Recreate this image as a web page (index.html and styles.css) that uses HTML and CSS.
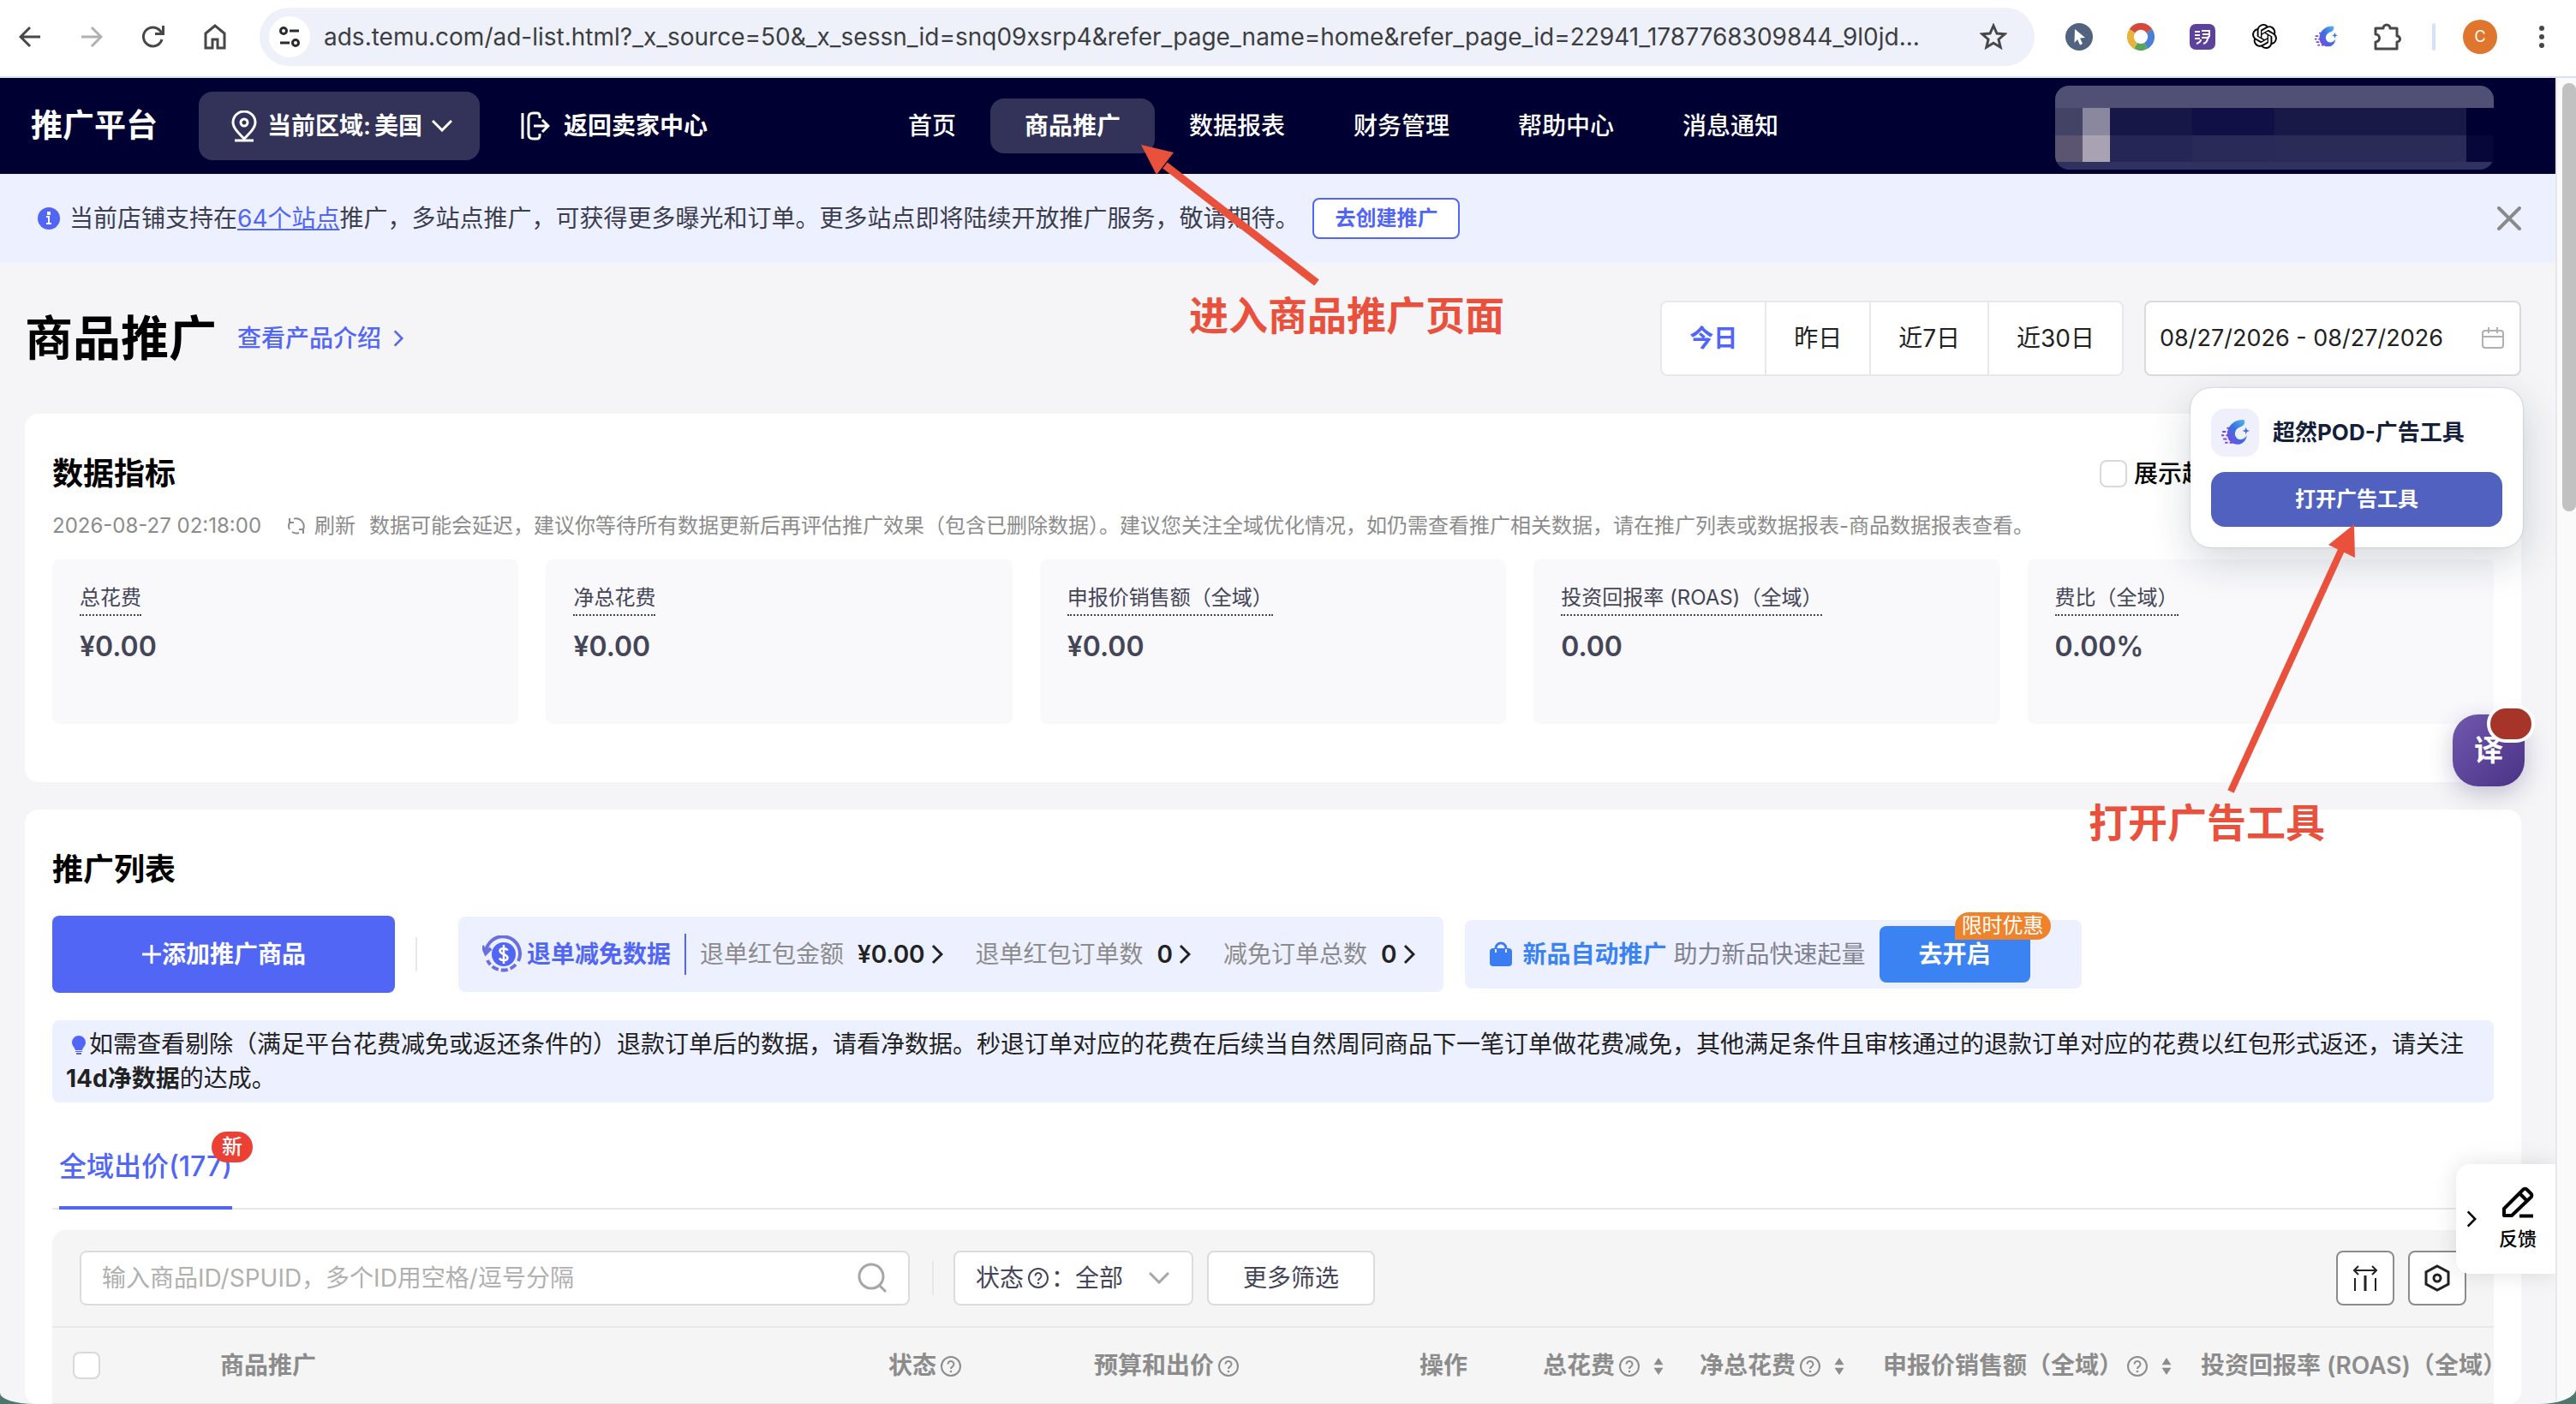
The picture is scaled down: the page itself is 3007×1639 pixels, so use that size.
FILE: index.html
```html
<!DOCTYPE html>
<html lang="zh-CN">
<head>
    <meta charset="UTF-8">
    <meta name="viewport" content="width=device-width, initial-scale=1.0">
    <title>商品推广</title>
    <link rel="stylesheet" href="styles.css">
</head>
<body>
    <svg class="symbols" aria-hidden="true">
        <symbol id="i-right" viewBox="0 0 14 24"><path d="M2 2l10 10L2 22" fill="none" stroke="currentColor" stroke-width="3"/></symbol>
        <symbol id="i-down" viewBox="0 0 24 14"><path d="M1 1l11 11L23 1" fill="none" stroke="currentColor" stroke-width="3"/></symbol>
        <symbol id="i-help" viewBox="0 0 24 24">
            <circle cx="12" cy="12" r="11" fill="none" stroke="currentColor" stroke-width="2"/>
            <path d="M8.500 9.500a3.500 3.500 0 1 1 5.500 2.800c-1.300 .9-2 1.300-2 2.700" fill="none" stroke="currentColor" stroke-width="2"/>
            <circle cx="12" cy="18" r="1.300" fill="currentColor"/>
        </symbol>
        <symbol id="i-sort" viewBox="0 0 12 22"><path d="M6 0l6 9H0zM6 22l6-9H0z" fill="currentColor"/></symbol>
        <symbol id="i-pod" viewBox="0 0 32 32">
            <defs>
                <linearGradient id="pod" x1="1" y1="0" x2="0" y2="1">
                    <stop offset="0" stop-color="#4fc3f5"/>
                    <stop offset=".5" stop-color="#3b6fe0"/>
                    <stop offset="1" stop-color="#7b4be0"/>
                </linearGradient>
            </defs>
            <path d="M26 2c2 4-1 7-5 8-5 2-7 8-3 12 4 3 8 1 11-3-1 8-8 12-15 9-7-3-8-12-5-17C12 5 19 1 26 2z" fill="url(#pod)"/>
            <path d="M28 10l1 3 3 1-3 1-1 3-1-3-3-1 3-1z" fill="#3b6fe0"/>
            <path d="M2 15h4M1 19h3M6 19h4M3 23h4M9 23h3M5 27h3M10 27h3M7 11h3" stroke="#7448dc" stroke-width="2"/>
        </symbol>
    </svg>

    <div class="toolbar">
        <button class="tool" aria-label="后退"><svg width="26" height="26" viewBox="0 0 26 26"><path d="M25 13H3M13 2L2 13l11 11" fill="none" stroke="#474747" stroke-width="3"/></svg></button>
        <button class="tool" aria-label="前进"><svg width="26" height="26" viewBox="0 0 26 26"><path d="M1 13h22M13 2l11 11-11 11" fill="none" stroke="#b0b0b0" stroke-width="3"/></svg></button>
        <button class="tool" aria-label="重新加载"><svg width="28" height="28" viewBox="0 0 28 28"><path d="M24 17a11 11 0 1 1-2-10l3 3M25.500 1v9.500H16" fill="none" stroke="#474747" stroke-width="3"/></svg></button>
        <button class="tool" aria-label="主页"><svg width="28" height="30" viewBox="0 0 28 30"><path d="M3 28V11l11-9 11 9v17h-8V18h-6v10z" fill="none" stroke="#474747" stroke-width="3"/></svg></button>
        <div class="address">
            <span class="site-info"><svg width="26" height="24" viewBox="0 0 26 24"><g fill="none" stroke="#2b2b2b" stroke-width="3"><circle cx="6" cy="5" r="3.500"/><circle cx="20" cy="19" r="3.500"/><path d="M13 5h11M2 19h11"/></g></svg></span>
            <input class="url" type="text" aria-label="地址" value="ads.temu.com/ad-list.html?_x_source=50&amp;_x_sessn_id=snq09xsrp4&amp;refer_page_name=home&amp;refer_page_id=22941_1787768309844_9l0jd...">
            <button class="tool" aria-label="收藏"><svg width="32" height="32" viewBox="0 0 32 32"><path d="M16 3l4 9 9 .8-7 6.200 2.200 9.200L16 23.300l-8.200 4.900L10 19l-7-6.200 9-.8z" fill="none" stroke="#474747" stroke-width="3"/></svg></button>
        </div>
        <button class="tool" aria-label="指针扩展"><svg width="32" height="32" viewBox="0 0 32 32"><circle cx="16" cy="16" r="16" fill="#526380"/><path d="M11 7l12 10-6 .6 3 6.400-3 1.400-3-6.500-3.500 4z" fill="#fff"/></svg></button>
        <button class="tool" aria-label="色环扩展"><svg width="32" height="32" viewBox="0 0 32 32"><g fill="none" stroke-width="8"><path d="M6 9.200A12 12 0 0 1 26 9.200" stroke="#d4493a"/><path d="M26 9.200A12 12 0 0 1 22 26.400" stroke="#4a7fd6"/><path d="M22 26.400A12 12 0 0 1 10 26.400" stroke="#5aa35a"/><path d="M10 26.400A12 12 0 0 1 6 9.200" stroke="#e8b33c"/></g></svg></button>
        <button class="tool" aria-label="翻译扩展"><svg width="30" height="30" viewBox="0 0 30 30"><rect width="30" height="30" rx="7" fill="#5d429c"/><path d="M6 9h6M6 13h6M6 17h6M14 8h9M15 12h8M23 7v7l-3 3M14 16h9M21 16c0 4-2 6-5 7M13 18c0 3-2 4-5 5" fill="none" stroke="#fff" stroke-width="2"/></svg></button>
        <button class="tool" aria-label="ChatGPT"><svg width="29" height="29" viewBox="0 0 24 24"><path d="M22.2819 9.8211a5.9847 5.9847 0 0 0-.5157-4.9108 6.0462 6.0462 0 0 0-6.5098-2.9A6.0651 6.0651 0 0 0 4.9807 4.1818a5.9847 5.9847 0 0 0-3.9977 2.9 6.0462 6.0462 0 0 0 .7427 7.0966 5.98 5.98 0 0 0 .511 4.9107 6.051 6.051 0 0 0 6.5146 2.9001A5.9847 5.9847 0 0 0 13.2599 24a6.0557 6.0557 0 0 0 5.7718-4.2058 5.9894 5.9894 0 0 0 3.9977-2.9001 6.0557 6.0557 0 0 0-.7475-7.0729zm-9.022 12.6081a4.4755 4.4755 0 0 1-2.8764-1.0408l.1419-.0804 4.7783-2.7582a.7948.7948 0 0 0 .3927-.6813v-6.7369l2.02 1.1686a.071.071 0 0 1 .038.052v5.5826a4.504 4.504 0 0 1-4.4945 4.4944zm-9.6607-4.1254a4.4708 4.4708 0 0 1-.5346-3.0137l.142.0852 4.783 2.7582a.7712.7712 0 0 0 .7806 0l5.8428-3.3685v2.3324a.0804.0804 0 0 1-.0332.0615L9.74 19.9502a4.4992 4.4992 0 0 1-6.1408-1.6464zM2.3408 7.8956a4.485 4.485 0 0 1 2.3655-1.9728V11.6a.7664.7664 0 0 0 .3879.6765l5.8144 3.3543-2.0201 1.1685a.0757.0757 0 0 1-.071 0l-4.8303-2.7865A4.504 4.504 0 0 1 2.3408 7.872zm16.5963 3.8558L13.1038 8.364 15.1192 7.2a.0757.0757 0 0 1 .071 0l4.8303 2.7913a4.4944 4.4944 0 0 1-.6765 8.1042v-5.6772a.79.79 0 0 0-.407-.667zm2.0107-3.0231l-.142-.0852-4.7735-2.7818a.7759.7759 0 0 0-.7854 0L9.409 9.2297V6.8974a.0662.0662 0 0 1 .0284-.0615l4.8303-2.7866a4.4992 4.4992 0 0 1 6.6802 4.66zM8.3065 12.863l-2.02-1.1638a.0804.0804 0 0 1-.038-.0567V6.0742a4.4992 4.4992 0 0 1 7.3757-3.4537l-.142.0805L8.704 5.459a.7948.7948 0 0 0-.3927.6813zm1.0976-2.3654l2.602-1.4998 2.6069 1.4998v2.9994l-2.5974 1.4997-2.6067-1.4997Z"/></svg></button>
        <button class="tool" aria-label="超然POD"><svg width="28" height="28"><use href="#i-pod"/></svg></button>
        <button class="tool" aria-label="扩展程序"><svg width="34" height="34" viewBox="0 0 34 34"><path d="M3 7h9a4 4 0 0 1 8 0h8v9a3 3 0 0 1 0 7v8H3v-8a4.500 4.500 0 0 0 0-9z" fill="none" stroke="#474747" stroke-width="3" stroke-linejoin="round"/></svg></button>
        <span class="tool-divider"></span>
        <button class="tool" aria-label="用户"><span class="avatar">C</span></button>
        <button class="tool" aria-label="菜单"><svg width="6" height="26" viewBox="0 0 6 26"><g fill="#474747"><circle cx="3" cy="3" r="3"/><circle cx="3" cy="13" r="3"/><circle cx="3" cy="23" r="3"/></g></svg></button>
    </div>

    <div class="viewport">
        <div class="page">
            <header class="header">
                <div class="header-left">
                    <span class="logo">推广平台</span>
                    <div class="region">
                        <svg width="30" height="37" viewBox="0 0 30 37" fill="none" stroke="#fff" stroke-width="3"><path d="M15 33C8 26 2 20 2 14a13 13 0 0 1 26 0c0 6-6 12-13 19z"/><circle cx="15" cy="14" r="4"/><path d="M4 35h22"/></svg>
                        <label for="region">当前区域:</label>
                        <select id="region"><option>美国</option></select>
                        <svg width="24" height="14"><use href="#i-down"/></svg>
                    </div>
                    <a class="back" href="#">
                        <svg width="34" height="34" viewBox="0 0 34 34" fill="none" stroke="#fff" stroke-width="3"><path d="M2 2v30M22 8V5a3 3 0 0 0-3-3h-5c-3 0-5 2-5 5v20c0 3 2 5 5 5h5a3 3 0 0 0 3-3v-3M15 17h16M25 10l7 7-7 7"/></svg>
                        返回卖家中心
                    </a>
                </div>
                <nav class="nav">
                    <a href="#">首页</a>
                    <a class="active" href="#">商品推广</a>
                    <a href="#">数据报表</a>
                    <a href="#">财务管理</a>
                    <a href="#">帮助中心</a>
                    <a href="#">消息通知</a>
                </nav>
                <!-- masked account info -->
                <div class="mask" aria-hidden="true">
                    <i class="m-top"></i>
                    <i class="m1"></i><i class="m2"></i><i class="m3"></i><i class="m4"></i><i class="m5"></i><i class="m6"></i>
                    <i class="m7"></i><i class="m8"></i><i class="m9"></i><i class="m10"></i><i class="m11"></i><i class="m12"></i>
                    <i class="m-bottom"></i>
                </div>
            </header>

            <div class="notice">
                <svg width="26" height="26" viewBox="0 0 26 26"><circle cx="13" cy="13" r="13" fill="#5166f5"/><path d="M10 11h3v8M10 19h6M12 6h2v2h-2z" fill="none" stroke="#fff" stroke-width="2"/></svg>
                <p>当前店铺支持在<a href="#">64个站点</a>推广，多站点推广，可获得更多曝光和订单。更多站点即将陆续开放推广服务，敬请期待。</p>
                <button class="create">去创建推广</button>
                <button class="close" aria-label="关闭"><svg width="28" height="28" viewBox="0 0 28 28"><path d="M2 2l24 24M26 2L2 26" stroke="#8a8a8a" stroke-width="4" stroke-linecap="round"/></svg></button>
            </div>

            <main class="content">
                <div class="title-row">
                    <h1>商品推广</h1>
                    <a class="intro" href="#">查看产品介绍 <svg width="12" height="22"><use href="#i-right"/></svg></a>
                    <div class="ranges">
                        <button class="active">今日</button>
                        <button>昨日</button>
                        <button>近7日</button>
                        <button>近30日</button>
                    </div>
                    <div class="date">
                        <input type="text" aria-label="日期范围" value="08/27/2026 - 08/27/2026">
                        <svg width="26" height="26" viewBox="0 0 26 26" fill="none" stroke="#b0b0b0" stroke-width="2"><rect x="1" y="4" width="24" height="20" rx="3"/><path d="M1 11h24M8 0v7M18 0v7"/></svg>
                    </div>
                </div>

                <section class="card metrics-card">
                    <div class="card-head">
                        <h2>数据指标</h2>
                        <label class="trend"><input class="check" type="checkbox">展示趋势图并对比昨日的数据信息</label>
                    </div>
                    <div class="updated">
                        <span>2026-08-27 02:18:00</span>
                        <a href="#"><svg width="22" height="22" viewBox="0 0 22 22" fill="none" stroke="currentColor" stroke-width="2"><path d="M3 15A9 9 0 0 1 3 7M3 2v5h5M8 2.600A9 9 0 0 1 19 8M19 8a9 9 0 0 1 0 7M19 20v-5h-5M14 19A9 9 0 0 1 6 18"/></svg>刷新</a>
                        <span>数据可能会延迟，建议你等待所有数据更新后再评估推广效果（包含已删除数据）。建议您关注全域优化情况，如仍需查看推广相关数据，请在推广列表或数据报表-商品数据报表查看。</span>
                    </div>
                    <div class="metrics">
                        <div class="metric"><span class="name">总花费</span><b>¥0.00</b></div>
                        <div class="metric"><span class="name">净总花费</span><b>¥0.00</b></div>
                        <div class="metric"><span class="name">申报价销售额（全域）</span><b>¥0.00</b></div>
                        <div class="metric"><span class="name">投资回报率 (ROAS)（全域）</span><b>0.00</b></div>
                        <div class="metric"><span class="name">费比（全域）</span><b>0.00%</b></div>
                    </div>
                </section>

                <section class="card list-card">
                    <h2>推广列表</h2>
                    <div class="actions">
                        <button class="add"><svg width="24" height="24" viewBox="0 0 24 24"><path d="M12 1v22M1 12h22" stroke="#fff" stroke-width="3"/></svg>添加推广商品</button>
                        <span class="divider"></span>
                        <div class="refund">
                            <svg width="48" height="44" viewBox="0 0 48 44"><g fill="none" stroke="#6a6ee0" stroke-width="4"><path d="M4 21A20 20 0 1 1 42 30"/><path d="M39 34A20 20 0 0 1 6 29" stroke-dasharray="8 3"/><path d="M0 12l4 9 6-6"/></g><circle cx="25" cy="22" r="14" fill="#5166f5"/><path d="M29.500 17.500c-1-3-9-3.500-9 .5s9 4 9 8-8 4-9.500 .5M25 11v22" fill="none" stroke="#fff" stroke-width="2.500"/></svg>
                            <strong>退单减免数据</strong>
                            <span class="bar"></span>
                            <span class="item">退单红包金额 <a href="#">¥0.00<svg width="14" height="24"><use href="#i-right"/></svg></a></span>
                            <span class="item">退单红包订单数 <a href="#">0<svg width="14" height="24"><use href="#i-right"/></svg></a></span>
                            <span class="item">减免订单总数 <a href="#">0<svg width="14" height="24"><use href="#i-right"/></svg></a></span>
                        </div>
                        <div class="auto">
                            <svg width="28" height="30" viewBox="0 0 28 30"><rect x="1" y="8" width="26" height="21" rx="4" fill="#3b7cf3"/><path d="M8 13V8a6 6 0 0 1 12 0v5" fill="none" stroke="#3b7cf3" stroke-width="3"/><path d="M8 9v4M20 9v4" stroke="#edf1ff" stroke-width="2"/></svg>
                            <strong>新品自动推广</strong>
                            <span>助力新品快速起量</span>
                            <div class="enable"><button>去开启</button><em>限时优惠</em></div>
                        </div>
                    </div>

                    <p class="tip"><svg width="24" height="24" viewBox="0 0 24 24"><path d="M12 1a8 8 0 0 1 8 8c0 4-3 5-4 9H8c-1-4-4-5-4-9a8 8 0 0 1 8-8zM8 19h8v1H8zM9 21h6v2H9z" fill="#5166f5"/></svg>如需查看剔除（满足平台花费减免或返还条件的）退款订单后的数据，请看净数据。秒退订单对应的花费在后续当自然周同商品下一笔订单做花费减免，其他满足条件且审核通过的退款订单对应的花费以红包形式返还，请关注<b>14d净数据</b>的达成。</p>

                    <div class="tabs">
                        <a href="#">全域出价(177)<em>新</em></a>
                    </div>

                    <div class="panel">
                        <div class="filters">
                            <div class="search">
                                <input type="text" aria-label="搜索商品" placeholder="输入商品ID/SPUID，多个ID用空格/逗号分隔">
                                <svg width="36" height="36" viewBox="0 0 36 36" fill="none" stroke="#a6a6a6" stroke-width="3"><circle cx="17" cy="16" r="14"/><path d="M27 27l7 7"/></svg>
                            </div>
                            <span class="divider"></span>
                            <div class="status">
                                <label for="status">状态<svg width="24" height="24"><use href="#i-help"/></svg>：</label>
                                <select id="status"><option>全部</option></select>
                                <svg class="arrow" width="24" height="14"><use href="#i-down"/></svg>
                            </div>
                            <button class="more">更多筛选</button>
                            <button class="square" aria-label="列宽"><svg width="28" height="30" viewBox="0 0 28 30" fill="none" stroke="#222" stroke-width="2"><path d="M2 6h24M6 1L1 6l5 5M22 1l5 5-5 5M2 15v15M26 15v15"/><path d="M14 12v18" stroke-width="3"/></svg></button>
                            <button class="square" aria-label="设置"><svg width="30" height="32" viewBox="0 0 30 32" fill="none" stroke="#222" stroke-width="3"><path d="M15 2l13 7v14l-13 7-13-7V9z"/><circle cx="15" cy="16" r="4"/></svg></button>
                        </div>
                        <table>
                            <colgroup>
                                <col class="c-check"><col><col class="c-status"><col class="c-budget"><col class="c-op"><col class="c-cost"><col class="c-net"><col class="c-sales"><col class="c-roas">
                            </colgroup>
                            <thead>
                                <tr>
                                    <th><input class="check" type="checkbox" aria-label="全选"></th>
                                    <th>商品推广</th>
                                    <th>状态<svg class="help" width="24" height="24"><use href="#i-help"/></svg></th>
                                    <th>预算和出价<svg class="help" width="24" height="24"><use href="#i-help"/></svg></th>
                                    <th>操作</th>
                                    <th>总花费<svg class="help" width="24" height="24"><use href="#i-help"/></svg><svg class="sort" width="12" height="20"><use href="#i-sort"/></svg></th>
                                    <th>净总花费<svg class="help" width="24" height="24"><use href="#i-help"/></svg><svg class="sort" width="12" height="20"><use href="#i-sort"/></svg></th>
                                    <th>申报价销售额（全域）<svg class="help" width="24" height="24"><use href="#i-help"/></svg><svg class="sort" width="12" height="20"><use href="#i-sort"/></svg></th>
                                    <th>投资回报率 (ROAS)（全域）</th>
                                </tr>
                            </thead>
                        </table>
                    </div>
                </section>
            </main>

            <div class="popup">
                <div class="popup-head"><span class="popup-icon"><svg width="34" height="34"><use href="#i-pod"/></svg></span>超然POD-广告工具</div>
                <button>打开广告工具</button>
            </div>
            <button class="translate">译<i></i></button>
            <button class="feedback">
                <svg width="12" height="22"><use href="#i-right"/></svg>
                <span>
                    <svg width="38" height="38" viewBox="0 0 38 38" fill="none" stroke="#000" stroke-width="4" stroke-linejoin="round"><path d="M3 27L25 5a3 3 0 0 1 5 0l4 4a3 3 0 0 1 0 5L12 35H3zM21 9l9 9"/><path d="M21 35.500h16"/></svg>
                    反馈
                </span>
            </button>

            <!-- step annotations -->
            <svg class="arrow-1" width="212" height="166" viewBox="0 0 212 166"><path d="M28 24L205 161" stroke="#e9513c" stroke-width="9"/><path d="M0 0l38 9-20 26z" fill="#e9513c"/></svg>
            <div class="step step-1">进入商品推广页面</div>
            <svg class="arrow-2" width="152" height="316" viewBox="0 0 152 316"><path d="M134 28L4 312" stroke="#e9513c" stroke-width="8"/><path d="M148 0l1 39-31-15z" fill="#e9513c"/></svg>
            <div class="step step-2">打开广告工具</div>
        </div>
        <div class="scrollbar"><div class="thumb"></div></div>
    </div>
</body>
</html>
```

FILE: styles.css
```css
* {
    box-sizing: border-box;
}

html {
    background: #4d776d;
}

body {
    margin: 0;
    height: 100vh;
    overflow: hidden;
    display: flex;
    flex-direction: column;
    background: #f5f5f7;
    border-radius: 0 0 44px 40px / 0 0 18px 13px;
    font-family: Inter, "Noto Sans CJK SC", sans-serif;
    font-size: 28px;
    line-height: 40px;
    color: #222;
}

h1, h2, p {
    margin: 0;
}

button, input, select {
    font: inherit;
    color: inherit;
    margin: 0;
    padding: 0;
    border: 0;
    background: none;
    outline: none;
}

select {
    appearance: none;
}

a {
    color: inherit;
    text-decoration: none;
}

em {
    font-style: normal;
}

svg {
    flex: none;
}

.symbols {
    position: absolute;
    width: 0;
    height: 0;
}

.check {
    appearance: none;
    flex: none;
    width: 32px;
    height: 32px;
    border: 2px solid #d9d9d9;
    border-radius: 8px;
    background: #fff;
}

/* browser toolbar */
.toolbar {
    flex: none;
    display: flex;
    align-items: center;
    gap: 24px;
    height: 91px;
    padding: 0 16px 4px 11px;
    background: #fff;
    border-bottom: 2px solid #d7e2f7;
}

.tool {
    flex: none;
    width: 48px;
    height: 48px;
    display: flex;
    align-items: center;
    justify-content: center;
}

.address {
    flex: 1;
    display: flex;
    align-items: center;
    height: 68px;
    margin: 0 4px;
    padding: 0 24px 0 11px;
    border-radius: 34px;
    background: #eef1fa;
}

.site-info {
    flex: none;
    width: 48px;
    height: 48px;
    margin-right: 16px;
    display: flex;
    align-items: center;
    justify-content: center;
    border-radius: 50%;
    background: #fff;
}

.url {
    flex: 1;
    min-width: 0;
    color: #3c3e42;
}

.tool-divider {
    width: 4px;
    height: 32px;
    margin: 0 4px;
    border-radius: 2px;
    background: #d3e1fb;
}

.avatar {
    width: 40px;
    height: 40px;
    border-radius: 50%;
    background: #e0762e;
    color: #fff;
    font-size: 18px;
    text-align: center;
}

/* page area */
.viewport {
    flex: 1;
    min-height: 0;
    display: flex;
}

.page {
    flex: 1;
    min-width: 0;
    position: relative;
    overflow: hidden;
}

.scrollbar {
    flex: none;
    width: 24px;
    padding: 6px 0 0 6px;
    border-left: 2px solid #e8e8e8;
    background: #fafafa;
}

.thumb {
    height: 500px;
    border-radius: 8px;
    background: #c1c1c1;
}

.header {
    display: flex;
    align-items: center;
    height: 112px;
    padding-right: 72px;
    background: #003;
    color: #fff;
}

.header-left {
    flex: 0 0 1020px;
    display: flex;
    align-items: center;
    gap: 48px;
    padding-left: 36px;
    font-weight: 600;
}

.logo {
    font-size: 37px;
    font-weight: 700;
}

.region {
    display: flex;
    align-items: center;
    height: 80px;
    padding: 0 32px 0 38px;
    border-radius: 16px;
    background: #333359;
}

.region label {
    margin: 0 4px 0 12px;
}

.region select {
    margin-right: 10px;
}

.back {
    display: flex;
    align-items: center;
    gap: 16px;
}

.nav {
    display: flex;
    font-weight: 500;
}

.nav a {
    padding: 12px 40px;
    border-radius: 16px;
}

.nav .active {
    background: #333359;
    font-weight: 700;
}

.mask {
    display: grid;
    grid-template-columns: 32px 32px 96px 96px 224px 32px;
    grid-template-rows: 26px 32px 31px 9px;
    margin-top: 4px;
    margin-left: auto;
    border-radius: 16px;
    overflow: hidden;
}

.m-top, .m-bottom {
    grid-column: 1 / -1;
    background: #505075;
}

.m-bottom {
    background: #313160;
}

.m1 { background: #434365; }
.m2 { background: #89889f; }
.m3 { background: #161647; }
.m4 { background: #101047; }
.m5 { background: #191947; }
.m6 { background: #003; }
.m7 { background: #5b5572; }
.m8 { background: #a8a2b2; }
.m9 { background: #262656; }
.m10 { background: #2a2a58; }
.m11 { background: #2b2b57; }
.m12 { background: #070739; }

.notice {
    display: flex;
    align-items: center;
    height: 104px;
    padding: 0 40px 0 44px;
    background: #edf1ff;
    color: #3c3e50;
}

.notice p {
    margin: 0 16px 0 11px;
}

.notice p a {
    color: #5166f5;
    text-decoration: underline;
}

.create {
    width: 172px;
    height: 48px;
    border: 2px solid #5166f5;
    border-radius: 8px;
    background: #fff;
    color: #5166f5;
    font-size: 24px;
    font-weight: 600;
}

.close {
    display: flex;
    margin-left: auto;
}

.content {
    padding: 0 40px 0 29px;
}

.title-row {
    display: flex;
    align-items: center;
    height: 176px;
}

h1 {
    font-size: 56px;
    font-weight: 600;
    line-height: 80px;
    color: #000;
}

.intro {
    display: flex;
    align-items: center;
    gap: 14px;
    margin-left: 24px;
    color: #5166f5;
    font-weight: 500;
}

.ranges {
    display: flex;
    height: 88px;
    margin-left: auto;
    border: 2px solid #e8e8ec;
    border-radius: 8px;
    background: #fff;
}

.ranges button {
    padding: 0 32px;
}

.ranges button + button {
    border-left: 2px solid #e8e8ec;
}

.ranges .active {
    color: #5166f5;
    font-weight: 600;
}

.date {
    display: flex;
    align-items: center;
    width: 440px;
    height: 88px;
    margin-left: 24px;
    padding: 0 18px 0 16px;
    border: 2px solid #d9d9de;
    border-radius: 8px;
    background: #fff;
    font-size: 27px;
}

.date input {
    flex: 1;
    min-width: 0;
}

.card {
    padding: 48px 32px 0;
    border-radius: 16px;
    background: #fff;
}

h2 {
    font-size: 36px;
    font-weight: 600;
    line-height: 44px;
    color: #000;
}

.metrics-card {
    padding-bottom: 68px;
}

.card-head {
    display: flex;
    align-items: center;
    justify-content: space-between;
}

.trend {
    display: flex;
    align-items: center;
    gap: 8px;
    color: #000;
    font-weight: 500;
    white-space: nowrap;
}

.updated {
    display: flex;
    align-items: center;
    gap: 16px;
    margin: 22px 0;
    font-size: 24px;
    line-height: 34px;
    color: #8c8c8c;
}

.updated a {
    display: flex;
    align-items: center;
    gap: 10px;
    margin-left: 14px;
}

.metrics {
    display: grid;
    grid-template-columns: repeat(5, 1fr);
    gap: 32px;
}

.metric {
    display: flex;
    flex-direction: column;
    align-items: flex-start;
    gap: 16px;
    height: 192px;
    padding: 28px 32px;
    border-radius: 8px;
    background: #f9f9fc;
    color: #454558;
}

.metric .name {
    padding-bottom: 2px;
    border-bottom: 2px dotted #454558;
    font-size: 24px;
    line-height: 34px;
}

.metric b {
    font-size: 32px;
    font-weight: 600;
}

.list-card {
    margin-top: 32px;
}

.actions {
    display: flex;
    align-items: center;
    margin: 32px 0;
}

.add {
    display: flex;
    align-items: center;
    justify-content: center;
    width: 400px;
    height: 90px;
    border-radius: 8px;
    background: #5166f5;
    color: #fff;
    font-weight: 600;
}

.divider {
    width: 2px;
    height: 40px;
    background: #e8e8ec;
}

.actions .divider {
    margin: 0 48px 0 24px;
}

.refund {
    display: flex;
    align-items: center;
    height: 88px;
    padding: 0 33px 0 28px;
    border-radius: 8px;
    background: #edf1ff;
}

.refund strong {
    margin: 0 16px 0 4px;
    color: #5166f5;
    font-weight: 600;
}

.bar {
    width: 2px;
    height: 48px;
    background: #5166f5;
}

.item {
    display: flex;
    gap: 16px;
    margin-left: 16px;
    color: #8c8c8c;
}

.item + .item {
    margin-left: 38px;
}

.item a {
    display: flex;
    align-items: center;
    gap: 7px;
    color: #222;
    font-weight: 600;
}

.auto {
    display: flex;
    align-items: center;
    height: 80px;
    margin-left: 25px;
    padding: 0 60px 0 28px;
    border-radius: 8px;
    background: #edf1ff;
    color: #80828f;
}

.auto strong {
    margin: 0 8px 0 12px;
    color: #3b82f3;
    font-weight: 600;
}

.enable {
    position: relative;
    margin-left: 16px;
}

.enable button {
    display: block;
    width: 176px;
    height: 66px;
    border-radius: 8px;
    background: #3b82f3;
    color: #fff;
    font-weight: 600;
}

.enable em {
    position: absolute;
    top: -16px;
    right: -24px;
    padding: 0 8px;
    border-radius: 16px 16px 16px 0;
    background: #ef832c;
    color: #fff;
    font-size: 24px;
    line-height: 32px;
}

.tip {
    padding: 8px 16px;
    border-radius: 8px;
    background: #edf1ff;
}

.tip svg {
    margin-left: 3px;
    vertical-align: -3px;
}

.tabs {
    display: flex;
    margin-top: 51px;
    padding-left: 8px;
    border-bottom: 2px solid #e8e8ec;
}

.tabs a {
    position: relative;
    margin-bottom: -2px;
    padding-bottom: 22px;
    border-bottom: 4px solid #5166f5;
    color: #5166f5;
    font-size: 32px;
    font-weight: 500;
    line-height: 48px;
}

.tabs em {
    position: absolute;
    top: -17px;
    right: -24px;
    padding: 0 12px;
    border-radius: 18px;
    background: #ed4035;
    color: #fff;
    font-size: 24px;
    line-height: 36px;
}

.panel {
    margin-top: 24px;
    border-radius: 16px 16px 0 0;
    background: #f5f5f5;
    overflow: hidden;
}

.filters {
    display: flex;
    align-items: center;
    gap: 16px;
    padding: 24px 32px;
    border-bottom: 2px solid #e8e8e8;
}

.search, .status, .more, .square {
    display: flex;
    align-items: center;
    height: 64px;
    border: 2px solid #dcdcdc;
    border-radius: 8px;
    background: #fff;
    color: #454558;
}

.search {
    flex: 0 0 969px;
    padding: 0 24px;
}

.search input {
    flex: 1;
}

.search input::placeholder {
    color: #b0b0b0;
}

.filters .divider {
    margin: 0 7px 0 10px;
}

.status {
    padding: 0 26px 0 24px;
}

.status label {
    display: flex;
    align-items: center;
}

.status label svg {
    margin: 0 3px 0 5px;
}

.arrow {
    margin-left: 29px;
    color: #a6a6a6;
}

.more {
    padding: 0 40px;
}

.square {
    flex: none;
    justify-content: center;
    width: 68px;
    border-color: #8c8c8c;
}

.more + .square {
    margin-left: auto;
}

table {
    width: 100%;
    table-layout: fixed;
    border-collapse: collapse;
}

th {
    height: 89px;
    padding: 0;
    border-bottom: 2px solid #e4e4e4;
    color: #8c8c8c;
    font-weight: 600;
    text-align: left;
    white-space: nowrap;
}

th .check {
    display: block;
    margin-left: 24px;
}

.help {
    margin-left: 5px;
    vertical-align: -3px;
}

.sort {
    margin-left: 16px;
    vertical-align: -1px;
}

.c-check { width: 196px; }
.c-status { width: 240px; }
.c-budget { width: 380px; }
.c-op { width: 144px; }
.c-cost { width: 183px; }
.c-net { width: 214px; }
.c-sales { width: 371px; }
.c-roas { width: 342px; }

/* floating parts */
.popup {
    position: absolute;
    top: 362px;
    right: 38px;
    width: 388px;
    padding: 24px;
    border-radius: 24px;
    background: #fff;
    box-shadow: 0 16px 48px rgba(20, 32, 58, .18), 0 0 2px rgba(20, 32, 58, .3);
}

.popup-head {
    display: flex;
    align-items: center;
    gap: 16px;
    margin-bottom: 18px;
    color: #14203a;
    font-size: 26px;
    font-weight: 700;
    white-space: nowrap;
}

.popup-icon {
    display: flex;
    align-items: center;
    justify-content: center;
    width: 56px;
    height: 56px;
    border-radius: 16px;
    background: #f0f0fd;
}

.popup button {
    display: block;
    width: 100%;
    height: 64px;
    border-radius: 16px;
    background: #5161bf;
    color: #fff;
    font-size: 24px;
    font-weight: 600;
}

.translate {
    position: absolute;
    top: 743px;
    right: 36px;
    width: 84px;
    height: 84px;
    border-radius: 30px;
    background: linear-gradient(135deg, #6f58ae, #4b3287);
    box-shadow: 0 8px 28px rgba(40, 30, 90, .25);
    color: #fff;
    font-size: 34px;
    font-weight: 600;
}

.translate i {
    position: absolute;
    top: -11px;
    right: -12px;
    width: 56px;
    height: 44px;
    border: 4px solid #fff;
    border-radius: 22px;
    background: #a63428;
}

.feedback {
    position: absolute;
    top: 1268px;
    right: 0;
    display: flex;
    align-items: center;
    gap: 26px;
    width: 116px;
    height: 128px;
    padding-left: 12px;
    border-radius: 16px 0 0 16px;
    background: #fff;
    box-shadow: 0 0 28px rgba(0, 0, 0, .12);
    color: #000;
    font-size: 22px;
    line-height: 32px;
}

.feedback span {
    display: flex;
    flex-direction: column;
    align-items: center;
    gap: 8px;
    font-weight: 500;
}

.step {
    position: absolute;
    color: #e9513c;
    font-size: 46px;
    font-weight: 600;
    line-height: 56px;
}

.step-1 {
    top: 249px;
    left: 1388px;
}

.step-2 {
    top: 841px;
    left: 2438px;
}

.arrow-1, .arrow-2 {
    position: absolute;
}

.arrow-1 {
    top: 78px;
    left: 1332px;
}

.arrow-2 {
    top: 521px;
    left: 2600px;
}
```
